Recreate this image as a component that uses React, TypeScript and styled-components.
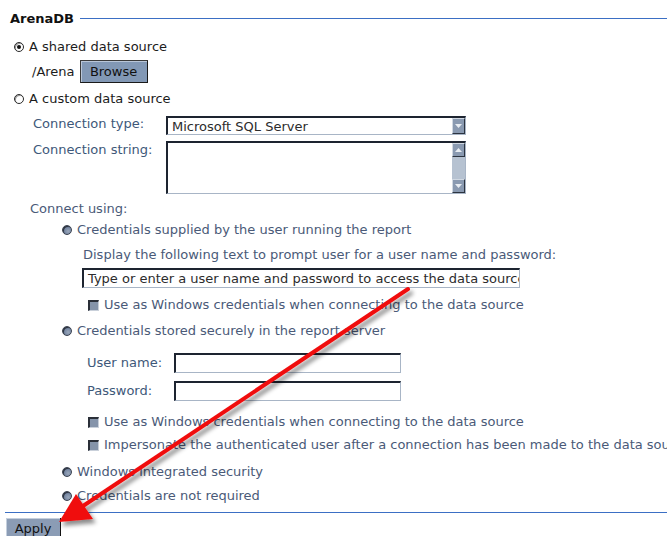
import React from 'react';
import styled, { createGlobalStyle } from 'styled-components';

const GlobalStyle = createGlobalStyle`
  html, body {
    margin: 0;
    padding: 0;
    background: #ffffff;
    overflow: hidden;
  }
  body {
    font-family: "DejaVu Sans", Verdana, sans-serif;
    font-size: 13px;
  }
`;

const Page = styled.div`
  position: relative;
  width: 667px;
  height: 536px;
  overflow: hidden;
  padding-top: 9px;
  box-sizing: border-box;
`;

const Header = styled.div`
  display: flex;
  align-items: center;
  height: 18px;
  padding-left: 10px;
  gap: 6px;
`;

const Footer = styled.div`
  display: flex;
  height: 1px;
  margin-top: 8px;
  padding-left: 5px;
`;

const Title = styled.span`
  font-weight: bold;
  color: #111;
  white-space: nowrap;
`;

const Rule = styled.div`
  flex: 1;
  height: 1px;
  background: #3b6fc4;
`;

const Row = styled.div<{ $mt: number; $indent: number; $h?: number }>`
  display: flex;
  align-items: center;
  gap: 5px;
  margin-top: ${(p) => p.$mt}px;
  padding-left: ${(p) => p.$indent}px;
  height: ${(p) => p.$h ?? 16}px;
  line-height: 16px;
  white-space: nowrap;
`;

const Text = styled.span<{ $muted?: boolean }>`
  color: ${(p) => (p.$muted ? '#4a5a78' : '#1c1c1c')};
`;

const Radio = styled.span<{ $checked?: boolean; $disabled?: boolean }>`
  position: relative;
  flex: none;
  width: 10px;
  height: 10px;
  border-radius: 50%;
  box-sizing: border-box;
  border: 1px solid ${(p) => (p.$disabled ? '#3a4250' : '#2a2a2a')};
  background: ${(p) =>
    p.$disabled ? 'radial-gradient(circle at 65% 65%, #9aa7ba 0%, #7384a0 55%, #4b5468 100%)' : '#fff'};
  box-shadow: ${(p) => (p.$disabled ? 'inset 1px 1px 0 #2b313c' : 'inset 1px 1px 0 #9a9a9a')};
  &::after {
    content: '';
    display: ${(p) => (p.$checked ? 'block' : 'none')};
    position: absolute;
    left: 2px;
    top: 2px;
    width: 4px;
    height: 4px;
    border-radius: 50%;
    background: #111;
  }
`;

const Check = styled.span`
  flex: none;
  width: 11px;
  height: 11px;
  box-sizing: border-box;
  background: #8594aa;
  border-top: 2px solid #2a2f38;
  border-left: 2px solid #2a2f38;
  border-right: 1px solid #c9d0da;
  border-bottom: 1px solid #c9d0da;
`;

const Button = styled.div<{ $w: number }>`
  width: ${(p) => p.$w}px;
  height: 23px;
  box-sizing: border-box;
  display: flex;
  align-items: center;
  justify-content: center;
  background: #8298b5;
  color: #111;
  border: 1px solid #1a1a1a;
  border-top-color: #3a3a3a;
  border-left-color: #3a3a3a;
  box-shadow: inset 1px 1px 0 #b9c6d8;
`;

const ApplyButton = styled(Button)`
  margin-top: 5px;
  margin-left: 6px;
  height: 24px;
  background: #8b9cb5;
  border: none;
  border-right: 1px solid #111;
  box-shadow: inset 1px 1px 0 #c4cfdd;
  align-items: flex-start;
  padding-top: 3px;
`;

const Fields = styled.div`
  display: grid;
  grid-template-columns: 133px 300px;
  row-gap: 6px;
  margin-top: 9px;
  padding-left: 33px;
`;

const Label = styled.span<{ $pt?: number }>`
  color: #3e5879;
  line-height: 16px;
  padding-top: ${(p) => p.$pt ?? 0}px;
  white-space: nowrap;
`;

const Inset = styled.div<{ $w: number; $h: number }>`
  position: relative;
  width: ${(p) => p.$w}px;
  height: ${(p) => p.$h}px;
  box-sizing: border-box;
  background: #fff;
  border-top: 2px solid #1d2430;
  border-left: 2px solid #1d2430;
  border-right: 1px solid #a8b5c6;
  border-bottom: 1px solid #a8b5c6;
  display: flex;
  align-items: center;
  padding-left: 4px;
  color: #2c2c2c;
  white-space: nowrap;
  overflow: hidden;
`;

const Scroll = styled.div`
  position: absolute;
  right: 0;
  top: 0;
  bottom: 0;
  width: 13px;
  background: #b6c2d1;
  display: flex;
  flex-direction: column;
  justify-content: space-between;
`;

const ScrollBtn = styled.div<{ $h: number }>`
  width: 13px;
  height: ${(p) => p.$h}px;
  box-sizing: border-box;
  background: #8a9ab1;
  border: 1px solid #2c3440;
  border-top-color: #d0d8e2;
  border-left-color: #d0d8e2;
  display: flex;
  align-items: center;
  justify-content: center;
`;

const Arrow = ({ up }: { up?: boolean }) => (
  <svg width="7" height="4" viewBox="0 0 7 4">
    <polygon points={up ? '0,4 7,4 3.5,0' : '0,0 7,0 3.5,4'} fill="#e8edf3" />
  </svg>
);

const Indent = styled.div<{ $mt: number; $indent: number }>`
  margin-top: ${(p) => p.$mt}px;
  padding-left: ${(p) => p.$indent}px;
`;

const FieldLabel = styled.span`
  display: inline-block;
  width: 82px;
  color: #3e5879;
`;

const Overlay = styled.svg`
  position: absolute;
  left: 0;
  top: 0;
  pointer-events: none;
`;

const App = () => {
  return (
    <Page>
      <GlobalStyle />
      <Header>
        <Title>ArenaDB</Title>
        <Rule />
      </Header>

      <Row $mt={12} $indent={14}>
        <Radio $checked />
        <Text>A shared data source</Text>
      </Row>
      <Row $mt={5} $indent={32} $h={23}>
        <Text>/Arena</Text>
        <Button $w={68}>Browse</Button>
      </Row>
      <Row $mt={8} $indent={14}>
        <Radio />
        <Text>A custom data source</Text>
      </Row>

      <Fields>
        <Label>Connection type:</Label>
        <Inset $w={300} $h={19}>
          Microsoft SQL Server
          <Scroll>
            <ScrollBtn $h={17}>
              <Arrow />
            </ScrollBtn>
          </Scroll>
        </Inset>
        <Label $pt={1}>Connection string:</Label>
        <Inset $w={300} $h={53}>
          <Scroll>
            <ScrollBtn $h={14}>
              <Arrow up />
            </ScrollBtn>
            <ScrollBtn $h={14}>
              <Arrow />
            </ScrollBtn>
          </Scroll>
        </Inset>
      </Fields>

      <Row $mt={7} $indent={30}>
        <Text $muted>Connect using:</Text>
      </Row>
      <Row $mt={5} $indent={62}>
        <Radio $disabled />
        <Text $muted>Credentials supplied by the user running the report</Text>
      </Row>
      <Row $mt={9} $indent={83}>
        <Text $muted>Display the following text to prompt user for a user name and password:</Text>
      </Row>
      <Indent $mt={5} $indent={82}>
        <Inset $w={438} $h={20}>
          Type or enter a user name and password to access the data source
        </Inset>
      </Indent>
      <Row $mt={9} $indent={88}>
        <Check />
        <Text $muted>Use as Windows credentials when connecting to the data source</Text>
      </Row>
      <Row $mt={10} $indent={62}>
        <Radio $disabled />
        <Text $muted>Credentials stored securely in the report server</Text>
      </Row>
      <Row $mt={14} $indent={87} $h={20}>
        <FieldLabel>User name:</FieldLabel>
        <Inset $w={227} $h={20} />
      </Row>
      <Row $mt={8} $indent={87} $h={20}>
        <FieldLabel>Password:</FieldLabel>
        <Inset $w={227} $h={20} />
      </Row>
      <Row $mt={13} $indent={88}>
        <Check />
        <Text $muted>Use as Windows credentials when connecting to the data source</Text>
      </Row>
      <Row $mt={7} $indent={88}>
        <Check />
        <Text $muted>
          Impersonate the authenticated user after a connection has been made to the data source
        </Text>
      </Row>
      <Row $mt={11} $indent={62}>
        <Radio $disabled />
        <Text $muted>Windows integrated security</Text>
      </Row>
      <Row $mt={8} $indent={62}>
        <Radio $disabled />
        <Text $muted>Credentials are not required</Text>
      </Row>

      <Footer>
        <Rule />
      </Footer>
      <ApplyButton $w={55}>Apply</ApplyButton>

      <Overlay width="667" height="536" viewBox="0 0 667 536">
        <defs>
          <filter id="shadow" x="-20%" y="-20%" width="140%" height="140%">
            <feDropShadow dx="3" dy="4" stdDeviation="2" floodColor="#000" floodOpacity="0.45" />
          </filter>
        </defs>
        <g filter="url(#shadow)">
          <line x1="408" y1="289" x2="80" y2="508" stroke="#f01010" strokeWidth="4" strokeLinecap="round" />
          <polygon points="59,522 76,494 93,519" fill="#f01010" />
        </g>
      </Overlay>
    </Page>
  );
};

export default App;
